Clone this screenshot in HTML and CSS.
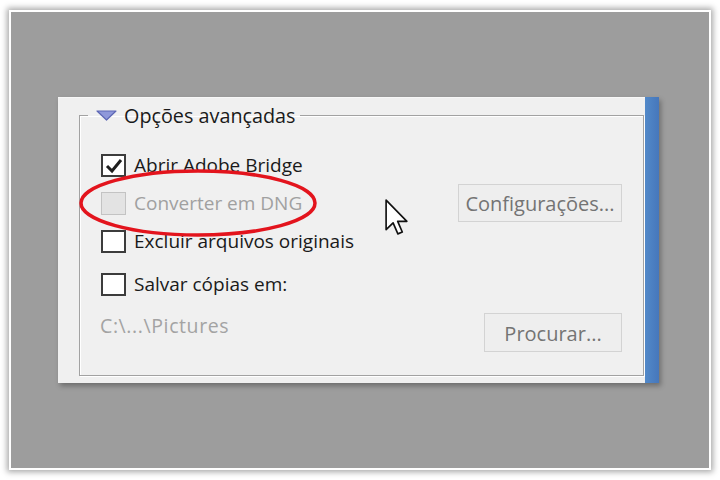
FILE: index.html
```html
<!DOCTYPE html>
<html lang="pt">
<head>
<meta charset="utf-8">
<title>Opções avançadas</title>
<link rel="stylesheet" href="styles.css">
</head>
<body>
<div class="frame">
  <div class="panel">
    <div class="panel-main">
      <fieldset class="group">
        <legend class="legend">
          <svg class="twisty" width="21" height="11" viewBox="0 0 21 11"><path d="M1 1 H20 L10.5 10 Z" fill="#8f98da" stroke="#5d67b5" stroke-width="1.2" stroke-linejoin="round"/></svg>
          <span>Opções avançadas</span>
        </legend>
        <div class="row">
          <label class="opt"><span class="box checked"><svg width="20" height="19" viewBox="0 0 20 19"><path d="M3 10 L8 15 L17 4" fill="none" stroke="#1e1e1e" stroke-width="3"/></svg></span>Abrir Adobe Bridge</label>
        </div>
        <div class="row">
          <label class="opt disabled"><span class="box"></span>Converter em DNG</label>
          <button class="btn btn-config">Configurações...</button>
        </div>
        <div class="row">
          <label class="opt"><span class="box"></span>Excluir arquivos originais</label>
        </div>
        <div class="row row-save">
          <label class="opt"><span class="box"></span>Salvar cópias em:</label>
        </div>
        <div class="row row-path">
          <span class="path">C:\...\Pictures</span>
          <button class="btn btn-browse">Procurar...</button>
        </div>
      </fieldset>
    </div>
    <div class="bar"></div>
    <svg class="ring" width="242" height="72" viewBox="0 0 242 72"><ellipse cx="120" cy="35" rx="117" ry="32" fill="none" stroke="#e3141d" stroke-width="3.5"/></svg>
    <svg class="cursor" width="23" height="37" viewBox="0 0 12.5 20"><path d="M0.6 0.6 V16.6 L4.4 12.9 L7 18.9 L9.4 17.9 L6.9 12.1 H11.9 Z" fill="#fff" stroke="#111" stroke-width="0.9" stroke-linejoin="round"/></svg>
  </div>
</div>
</body>
</html>
```
FILE: styles.css
```css
* { box-sizing: border-box; }
html, body { margin: 0; padding: 0; background: #ffffff; }
body { width: 720px; height: 480px; overflow: hidden; font-family: "Open Sans", "Noto Sans", sans-serif; }

.frame {
  margin: 10px 0 0 9px;
  width: 702px;
  height: 460px;
  border: 2px solid #ffffff;
  background: #9d9d9d;
  box-shadow: 0 0 6px 2px rgba(0,0,0,0.35);
  padding: 85px 0 0 47px;
}

.panel {
  position: relative;
  display: flex;
  width: 601px;
  height: 286px;
  box-shadow: 2px 3px 5px rgba(0,0,0,0.3);
}
.panel-main {
  flex: 1;
  background: #f0f0f0;
  border-top: 1px solid #f7f7f7;
  padding: 4px 1px 0 21px;
}
.bar {
  width: 14px;
  background: linear-gradient(to right, #5289c9, #4677bb);
}

.group {
  margin: 0;
  border: 1px solid #a2a2a2;
  box-shadow: inset 1px 1px 0 #ffffff, 1px 1px 0 #ffffff;
  padding: 18px 21px 22px 21px;
}
.legend {
  display: flex;
  align-items: center;
  gap: 7px;
  height: 26px;
  margin-left: -13px;
  padding: 0 4px 0 8px;
  font-size: 19.8px;
  color: #1a1a1a;
}
.twisty { display: block; margin-top: 1px; }

.row {
  display: flex;
  align-items: center;
  justify-content: space-between;
  height: 38px;
}
.row-save { margin-top: 5px; }
.row-path { margin-top: 10px; height: 40px; align-items: flex-start; }

.opt {
  display: flex;
  align-items: center;
  gap: 8px;
  font-size: 19px;
  color: #1a1a1a;
}
.opt.disabled { color: #a0a0a0; }
.box {
  display: flex;
  align-items: center;
  justify-content: center;
  width: 25px;
  height: 23px;
  border: 2px solid #3c3c3c;
  background: #ffffff;
}
.opt.disabled .box {
  border: 1.5px solid #c3c3c3;
  background: #e3e3e3;
}

.path {
  font-size: 19.5px;
  line-height: 26px;
  letter-spacing: 0.6px;
  color: #a3a3a3;
  margin-left: -1px;
}

.btn {
  font-family: inherit;
  font-size: 20px;
  color: #747474;
  background: #eeeeee;
  border: 1px solid #d3d3d3;
  padding: 0;
  text-align: center;
}
.btn-config { width: 164px; height: 38px; }
.btn-browse { width: 138px; height: 39px; padding-top: 1px; }

.ring { position: absolute; left: 20px; top: 71px; }
.cursor { position: absolute; left: 327px; top: 102px; }
```
